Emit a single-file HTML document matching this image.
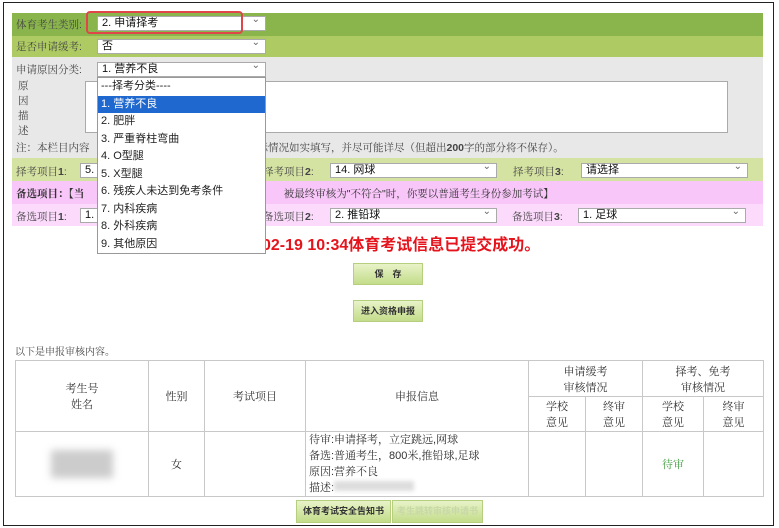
<!DOCTYPE html>
<html><head><meta charset="utf-8"><style>
*{margin:0;padding:0;box-sizing:border-box}
body{width:779px;height:528px;background:#fff;position:relative;overflow:hidden;font-family:"Liberation Sans","Noto Serif CJK SC","Noto Sans CJK SC",serif;font-size:10.5px;color:#333}
.a{position:absolute}
.frame{left:3px;top:2px;width:771px;height:524px;border:1.5px solid #222}
.sel{position:absolute;background:#fff;border:1px solid #aaa;height:15px;font-family:"Liberation Sans","Noto Sans CJK SC",sans-serif;font-size:11px;line-height:13px;padding-left:4px;color:#111}
.sel:after{content:"⌄";position:absolute;right:5px;top:-4px;font-size:10px;color:#666}
.lbl{position:absolute;font-size:10.5px;color:#444}
.btn{position:absolute;background:linear-gradient(#e8f3c8,#c3dc8a);border:1px solid #b6cf7e;font-size:9px;font-weight:bold;text-align:center;color:#333;font-family:"Liberation Sans","Noto Sans CJK SC",sans-serif}
table{position:absolute;left:15px;top:360px;width:749px;height:137px;border-collapse:collapse}
td{border:1.5px solid #c8c8c8;text-align:center;font-size:11px;color:#333}
.dd{left:97px;top:77px;width:169px;height:177px;background:#fff;border:1px solid #999;font-family:"Liberation Sans","Noto Sans CJK SC",sans-serif;font-size:11px;color:#222;overflow:hidden}
.dd div{height:17.5px;line-height:17.5px;padding-left:3px}
</style></head><body>
<div class="a frame"></div>
<div class="a" style="left:12px;top:13px;width:751px;height:23px;background:#8ab54c"></div>
<div class="a" style="left:12px;top:36px;width:751px;height:21px;background:#aecb63"></div>
<div class="a" style="left:12px;top:57px;width:751px;height:101px;background:#e8e8e8"></div>
<div class="a" style="left:12px;top:158px;width:751px;height:23px;background:#d5e3a2"></div>
<div class="a" style="left:12px;top:181px;width:751px;height:23px;background:#f9c6f9"></div>
<div class="a" style="left:12px;top:204px;width:751px;height:22px;background:#fbdafb"></div>

<div class="lbl" style="left:16px;top:17px">体育考生类别:</div>
<div class="sel" style="left:97px;top:16px;width:169px">2. 申请择考</div>
<div class="a" style="left:86px;top:11px;width:157px;height:23px;border:2px solid #e0454a;border-radius:4px"></div>
<div class="lbl" style="left:16px;top:39px">是否申请缓考:</div>
<div class="sel" style="left:97px;top:39px;width:169px">否</div>
<div class="lbl" style="left:16px;top:62px">申请原因分类:</div>
<div class="sel" style="left:97px;top:62px;width:169px">1. 营养不良</div>
<div class="lbl" style="left:18px;top:79px;line-height:15px;width:12px">原因描述</div>
<div class="a" style="left:85px;top:81px;width:643px;height:52px;background:#fff;border:1px solid #aaa"></div>
<div class="lbl" style="left:16px;top:140px">注：本栏目内容　　　　　　　　　　　　请根据实际情况如实填写，并尽可能详尽（但超出<b>200</b>字的部分将不保存）。</div>

<div class="lbl" style="left:16px;top:164px">择考项目<b>1</b>:</div>
<div class="sel" style="left:80px;top:163px;width:30px">5.</div>
<div class="lbl" style="left:263px;top:164px">择考项目<b>2</b>:</div>
<div class="sel" style="left:330px;top:163px;width:167px">14. 网球</div>
<div class="lbl" style="left:513px;top:164px">择考项目<b>3</b>:</div>
<div class="sel" style="left:581px;top:163px;width:167px">请选择</div>
<div class="lbl" style="left:16px;top:186px;color:#333"><b>备选项目：【当</b>　　　　　　　　　　　　　　　　　　　被最终审核为"不符合"时，你要以普通考生身份参加考试<b>】</b></div>
<div class="lbl" style="left:16px;top:209px">备选项目<b>1</b>:</div>
<div class="sel" style="left:80px;top:208px;width:30px">1.</div>
<div class="lbl" style="left:263px;top:209px">备选项目<b>2</b>:</div>
<div class="sel" style="left:330px;top:208px;width:167px">2. 推铅球</div>
<div class="lbl" style="left:512px;top:209px">备选项目<b>3</b>:</div>
<div class="sel" style="left:578px;top:208px;width:168px">1. 足球</div>
<div class="a" style="left:262px;top:231px;font-size:16px;font-weight:bold;color:#e5141c;font-family:'Liberation Sans','Noto Sans CJK SC',sans-serif">02-19 10:34体育考试信息已提交成功。</div>

<div class="a dd">
<div>---择考分类----</div>
<div style="background:#1f68cf;color:#fff">1. 营养不良</div>
<div>2. 肥胖</div><div>3. 严重脊柱弯曲</div><div>4. O型腿</div><div>5. X型腿</div>
<div>6. 残疾人未达到免考条件</div><div>7. 内科疾病</div><div>8. 外科疾病</div><div>9. 其他原因</div>
</div>

<div class="btn" style="left:353px;top:263px;width:70px;height:22px;line-height:20px">保　存</div>
<div class="btn" style="left:353px;top:300px;width:70px;height:22px;line-height:20px">进入资格申报</div>
<div class="lbl" style="left:15px;top:343px;font-size:10px">以下是申报审核内容。</div>

<table>
<tr style="height:36px"><td rowspan="2" style="width:133px">考生号<br>姓名</td><td rowspan="2" style="width:56px">性别</td><td rowspan="2" style="width:101px">考试项目</td><td rowspan="2" style="width:223px">申报信息</td><td colspan="2">申请缓考<br>审核情况</td><td colspan="2">择考、免考<br>审核情况</td></tr>
<tr style="height:35px"><td style="width:57px">学校<br>意见</td><td style="width:57px">终审<br>意见</td><td style="width:61px">学校<br>意见</td><td>终审<br>意见</td></tr>
<tr><td><div style="width:62px;height:28px;margin:auto;background:#ccc;filter:blur(4px)"></div></td><td>女</td><td></td><td style="text-align:left;line-height:16px;padding-left:3px">待审:申请择考，立定跳远,网球<br>备选:普通考生，800米,推铅球,足球<br>原因:营养不良<br>描述:<span style="display:inline-block;width:80px;height:10px;background:#ddd;filter:blur(2px)"></span></td><td></td><td></td><td style="color:#3a9a3a">待审</td><td></td></tr>
</table>

<div class="btn" style="left:296px;top:500px;width:95px;height:23px;line-height:21px">体育考试安全告知书</div>
<div class="btn" style="left:392px;top:500px;width:91px;height:23px;line-height:21px;color:#c8d8a8">考生跳转审核申请书</div>
</body></html>
